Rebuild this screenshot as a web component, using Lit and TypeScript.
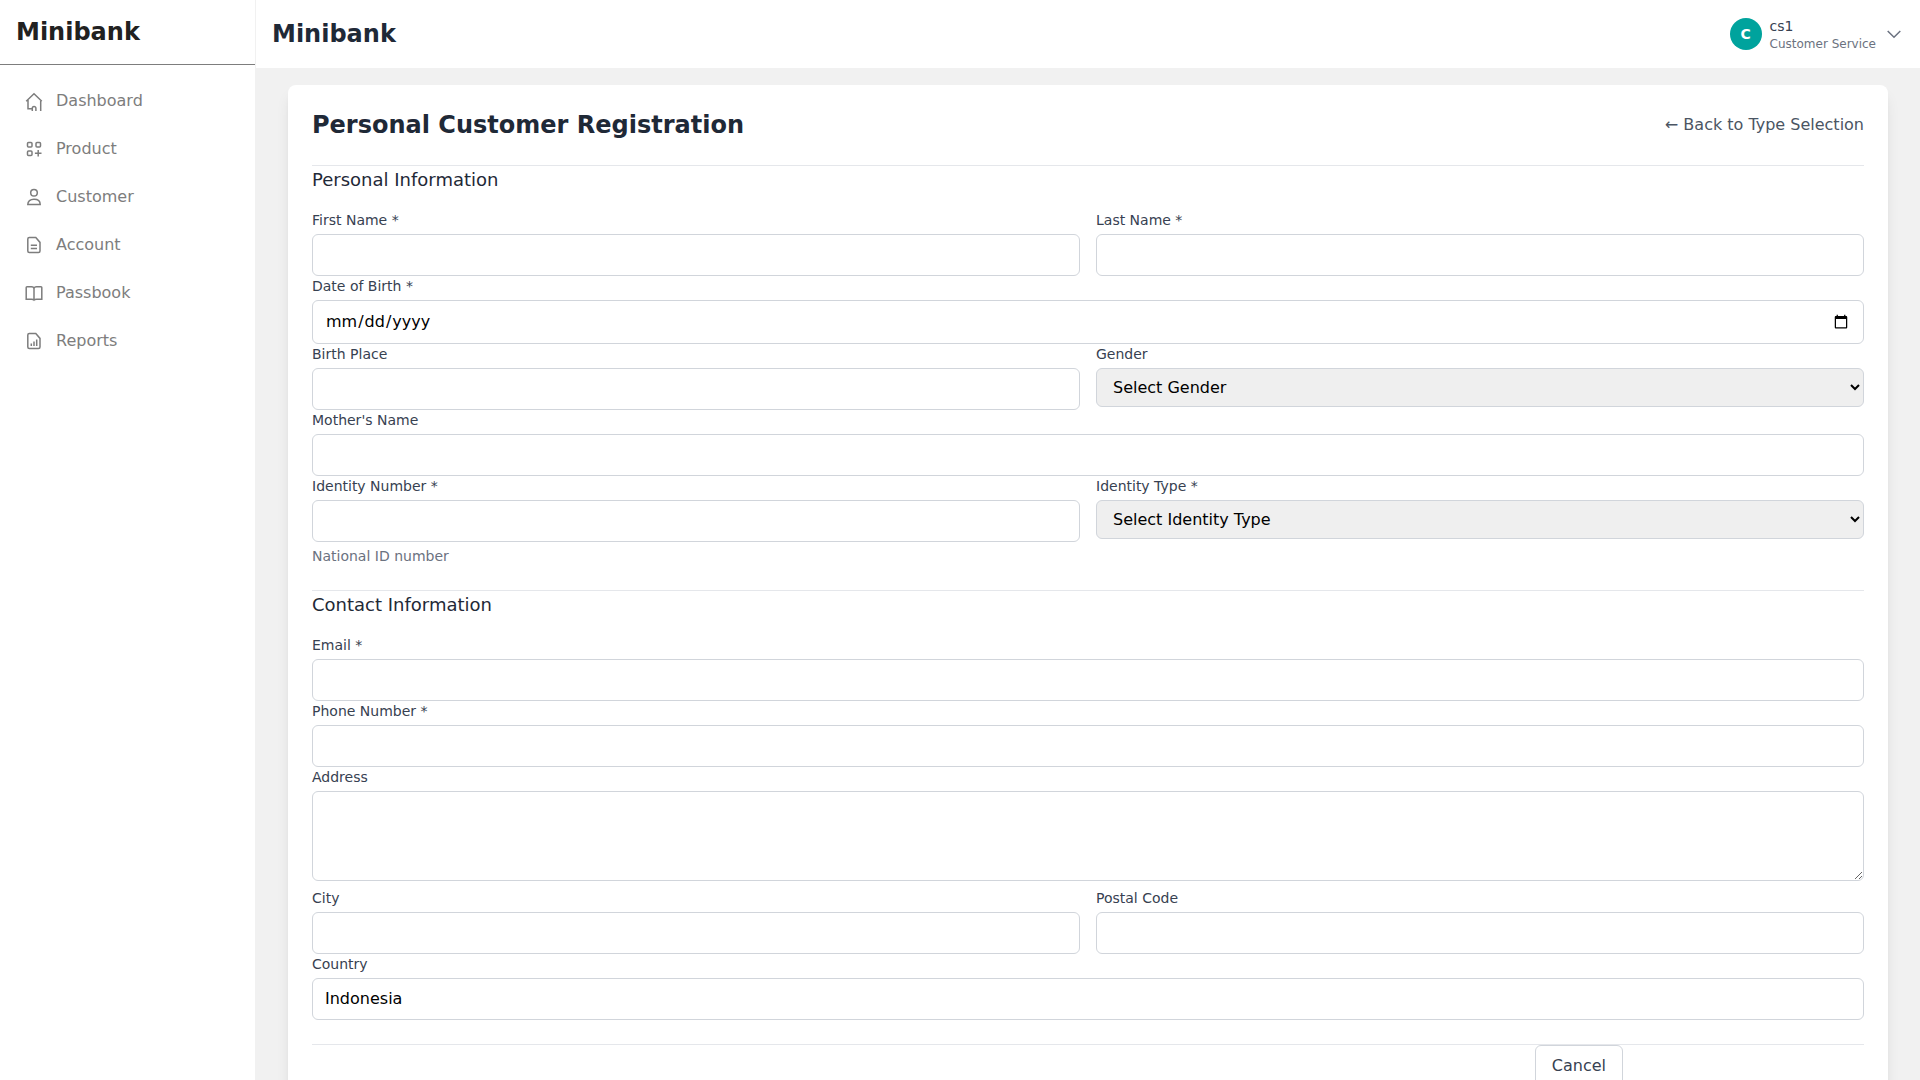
import { LitElement, html, css, svg, nothing } from "lit";
import { customElement, property } from "lit/decorators.js";

const page = "M4.3 1.5H10.800L15 6.400V15a1.500 1.500 0 0 1-1.500 1.500H4.300A1.500 1.500 0 0 1 2.800 15V3a1.500 1.500 0 0 1 1.500-1.500z";

const icons = {
  dashboard: svg`<path d="M1.200 9.200 9 1.700l7.800 7.500M3 8v8.700h4.200M15.700 9v10M7.300 19v-2.700a1.800 1.800 0 0 1 3.600 0V19"/>`,
  product: svg`<rect x="2.500" y="2.500" width="4.500" height="4.500" rx="1"/><rect x="11" y="2.500" width="4.500" height="4.500" rx="1"/><rect x="2.500" y="11" width="4.500" height="4.500" rx="1"/><path d="M13.200 10v6.600M9.900 13.300h6.600"/>`,
  customer: svg`<circle cx="9" cy="4.800" r="3.300"/><path d="M2.800 16.500c0-3.300 2.400-5.200 6.200-5.200s6.200 1.900 6.200 5.200z"/>`,
  account: svg`<path d=${page}/><path d="M5.800 9.200H12M5.800 12.600H12"/>`,
  passbook: svg`<path d="M1.200 16V3.500q0-.8.800-.8H6.500C8 2.700 9 3.500 9 4.800c0-1.300 1-2.100 2.500-2.100H16q.8 0 .8.800V16M1.200 15.200H6.500c1.300 0 2 .2 2.500.8.500-.6 1.200-.8 2.500-.8h5.300M9 4.500V16"/>`,
  reports: svg`<path d=${page}/><path d="M6.300 11.500V14M9 9.500V14M11.700 7.500V14"/>`,
};

const navItems: { label: string; icon: keyof typeof icons }[] = [
  { label: "Dashboard", icon: "dashboard" },
  { label: "Product", icon: "product" },
  { label: "Customer", icon: "customer" },
  { label: "Account", icon: "account" },
  { label: "Passbook", icon: "passbook" },
  { label: "Reports", icon: "reports" },
];

@customElement("side-nav")
export class SideNav extends LitElement {
  static styles = css`
    :host {
      display: block;
      background: #fff;
      border-right: 1px solid #f1f1f1;
    }
    .brand {
      padding: 16px;
      border-bottom: 1px solid #7d7d7d;
      color: #212121;
      font-size: 24px;
      line-height: 32px;
      font-weight: 700;
    }
    .list {
      list-style: none;
      margin: 0;
      padding: 12px 16px;
    }
    .link {
      display: flex;
      align-items: center;
      gap: 13px;
      height: 48px;
      padding: 0 9px;
      color: #7d7d7d;
      font-size: 16px;
      line-height: 24px;
      text-decoration: none;
    }
    .icon {
      width: 18px;
      height: 18px;
      overflow: visible;
      fill: none;
      stroke: currentColor;
      stroke-width: 1.5;
    }
  `;

  render() {
    return html`
      <div class="brand">Minibank</div>
      <nav aria-label="Main">
        <ul class="list">
          ${navItems.map(
            (item) => html`<li>
              <a class="link" href="#">
                <svg class="icon" viewBox="0 0 18 18" aria-hidden="true">${icons[item.icon]}</svg>
                <span>${item.label}</span>
              </a>
            </li>`
          )}
        </ul>
      </nav>
    `;
  }
}

@customElement("top-bar")
export class TopBar extends LitElement {
  static styles = css`
    :host {
      display: flex;
      align-items: center;
      justify-content: space-between;
      height: 68px;
      padding: 0 16px;
      background: #fff;
    }
    .title {
      margin: 0;
      color: #1f2937;
      font-size: 24px;
      line-height: 32px;
      font-weight: 700;
    }
    .user {
      display: flex;
      align-items: center;
      gap: 8px;
      padding: 0;
      border: 0;
      background: none;
      font-family: inherit;
      text-align: left;
    }
    .avatar {
      width: 32px;
      height: 32px;
      border-radius: 50%;
      background: #00a39d;
      color: #fff;
      font-size: 14px;
      line-height: 32px;
      font-weight: 700;
      text-align: center;
    }
    .name,
    .role {
      display: block;
    }
    .name {
      color: #374151;
      font-size: 14px;
      line-height: 20px;
    }
    .role {
      color: #6b7280;
      font-size: 12px;
      line-height: 16px;
    }
    .chevron {
      width: 20px;
      height: 20px;
      fill: none;
      stroke: #6b7280;
      stroke-width: 1.5;
    }
  `;

  render() {
    return html`
      <h1 class="title">Minibank</h1>
      <button class="user" type="button">
        <span class="avatar">C</span>
        <span>
          <span class="name">cs1</span>
          <span class="role">Customer Service</span>
        </span>
        <svg class="chevron" viewBox="0 0 20 20" aria-hidden="true">
          <path d="M3.700 7l6.300 6.300L16.300 7" />
        </svg>
      </button>
    `;
  }
}

@customElement("form-field")
export class FormField extends LitElement {
  @property() label = "";
  @property() kind = "text";
  @property() value = "";
  @property() option = "";
  @property() hint = "";

  static styles = css`
    :host {
      display: block;
    }
    .label {
      display: block;
      margin-bottom: 4px;
      color: #374151;
      font-size: 14px;
      line-height: 20px;
    }
    .control {
      display: block;
      box-sizing: border-box;
      width: 100%;
      padding: 8px 12px;
      border: 1px solid #d1d5db;
      border-radius: 6px;
      background-color: #fff;
      color: #000;
      font-family: inherit;
      font-size: 16px;
      line-height: 24px;
    }
    .select {
      height: 39px;
      background-color: #efefef;
    }
    .area {
      margin-bottom: 7px;
      resize: vertical;
    }
    .hint {
      margin: 4px 0 0;
      color: #6b7280;
      font-size: 14px;
      line-height: 20px;
    }
  `;

  private control() {
    if (this.kind === "select") {
      return html`<select id="control" class="control select">
        <option>${this.option}</option>
      </select>`;
    }
    if (this.kind === "textarea") {
      return html`<textarea id="control" class="control area" rows="3"></textarea>`;
    }
    return html`<input id="control" class="control" type=${this.kind} .value=${this.value} />`;
  }

  render() {
    return html`
      <label class="label" for="control">${this.label}</label>
      ${this.control()}
      ${this.hint ? html`<p class="hint">${this.hint}</p>` : nothing}
    `;
  }
}

@customElement("app-root")
export class AppRoot extends LitElement {
  static styles = css`
    :host {
      display: grid;
      grid-template-columns: 256px minmax(0, 1fr);
      height: 100vh;
      overflow: hidden;
      background: #f1f1f1;
      font-family: "DejaVu Sans", sans-serif;
    }
    .main {
      display: flex;
      flex-direction: column;
      min-height: 0;
    }
    .bar {
      flex: none;
    }
    .content {
      flex: 1;
      min-height: 0;
      overflow: hidden;
      padding: 17px 32px;
    }
    .card {
      padding: 24px;
      border-radius: 8px;
      background: #fff;
      box-shadow: 0 10px 15px -3px rgb(0 0 0 / 0.1), 0 4px 6px -4px rgb(0 0 0 / 0.1);
    }
    .head {
      display: flex;
      align-items: center;
      justify-content: space-between;
      margin-bottom: 24px;
    }
    .title {
      margin: 0;
      color: #1f2937;
      font-size: 24px;
      line-height: 32px;
      font-weight: 700;
    }
    .back {
      color: #4b5563;
      font-size: 16px;
      line-height: 24px;
      text-decoration: none;
    }
    .section {
      margin-bottom: 24px;
      border-top: 1px solid #e5e7eb;
    }
    .heading {
      margin: 0 0 16px;
      color: #1f2937;
      font-size: 18px;
      line-height: 28px;
      font-weight: 400;
    }
    .row {
      display: grid;
      grid-template-columns: repeat(2, minmax(0, 1fr));
      gap: 16px;
    }
    .actions {
      display: flex;
      justify-content: flex-end;
      padding-right: 241px;
      border-top: 1px solid #e5e7eb;
    }
    .cancel {
      padding: 8px 16px;
      border: 1px solid #d1d5db;
      border-radius: 6px;
      background: #fff;
      color: #374151;
      font-family: inherit;
      font-size: 16px;
      line-height: 24px;
    }
  `;

  render() {
    return html`
      <side-nav></side-nav>
      <div class="main">
        <top-bar class="bar"></top-bar>
        <main class="content">
          <div class="card">
            <div class="head">
              <h2 class="title">Personal Customer Registration</h2>
              <a class="back" href="#">← Back to Type Selection</a>
            </div>
            <form>
              <section class="section">
                <h3 class="heading">Personal Information</h3>
                <div class="row">
                  <form-field label="First Name *"></form-field>
                  <form-field label="Last Name *"></form-field>
                </div>
                <form-field label="Date of Birth *" kind="date"></form-field>
                <div class="row">
                  <form-field label="Birth Place"></form-field>
                  <form-field label="Gender" kind="select" option="Select Gender"></form-field>
                </div>
                <form-field label="Mother's Name"></form-field>
                <div class="row">
                  <form-field label="Identity Number *" hint="National ID number"></form-field>
                  <form-field label="Identity Type *" kind="select" option="Select Identity Type"></form-field>
                </div>
              </section>
              <section class="section">
                <h3 class="heading">Contact Information</h3>
                <form-field label="Email *" kind="email"></form-field>
                <form-field label="Phone Number *" kind="tel"></form-field>
                <form-field label="Address" kind="textarea"></form-field>
                <div class="row">
                  <form-field label="City"></form-field>
                  <form-field label="Postal Code"></form-field>
                </div>
                <form-field label="Country" value="Indonesia"></form-field>
              </section>
              <div class="actions">
                <button class="cancel" type="button">Cancel</button>
              </div>
            </form>
          </div>
        </main>
      </div>
    `;
  }
}
